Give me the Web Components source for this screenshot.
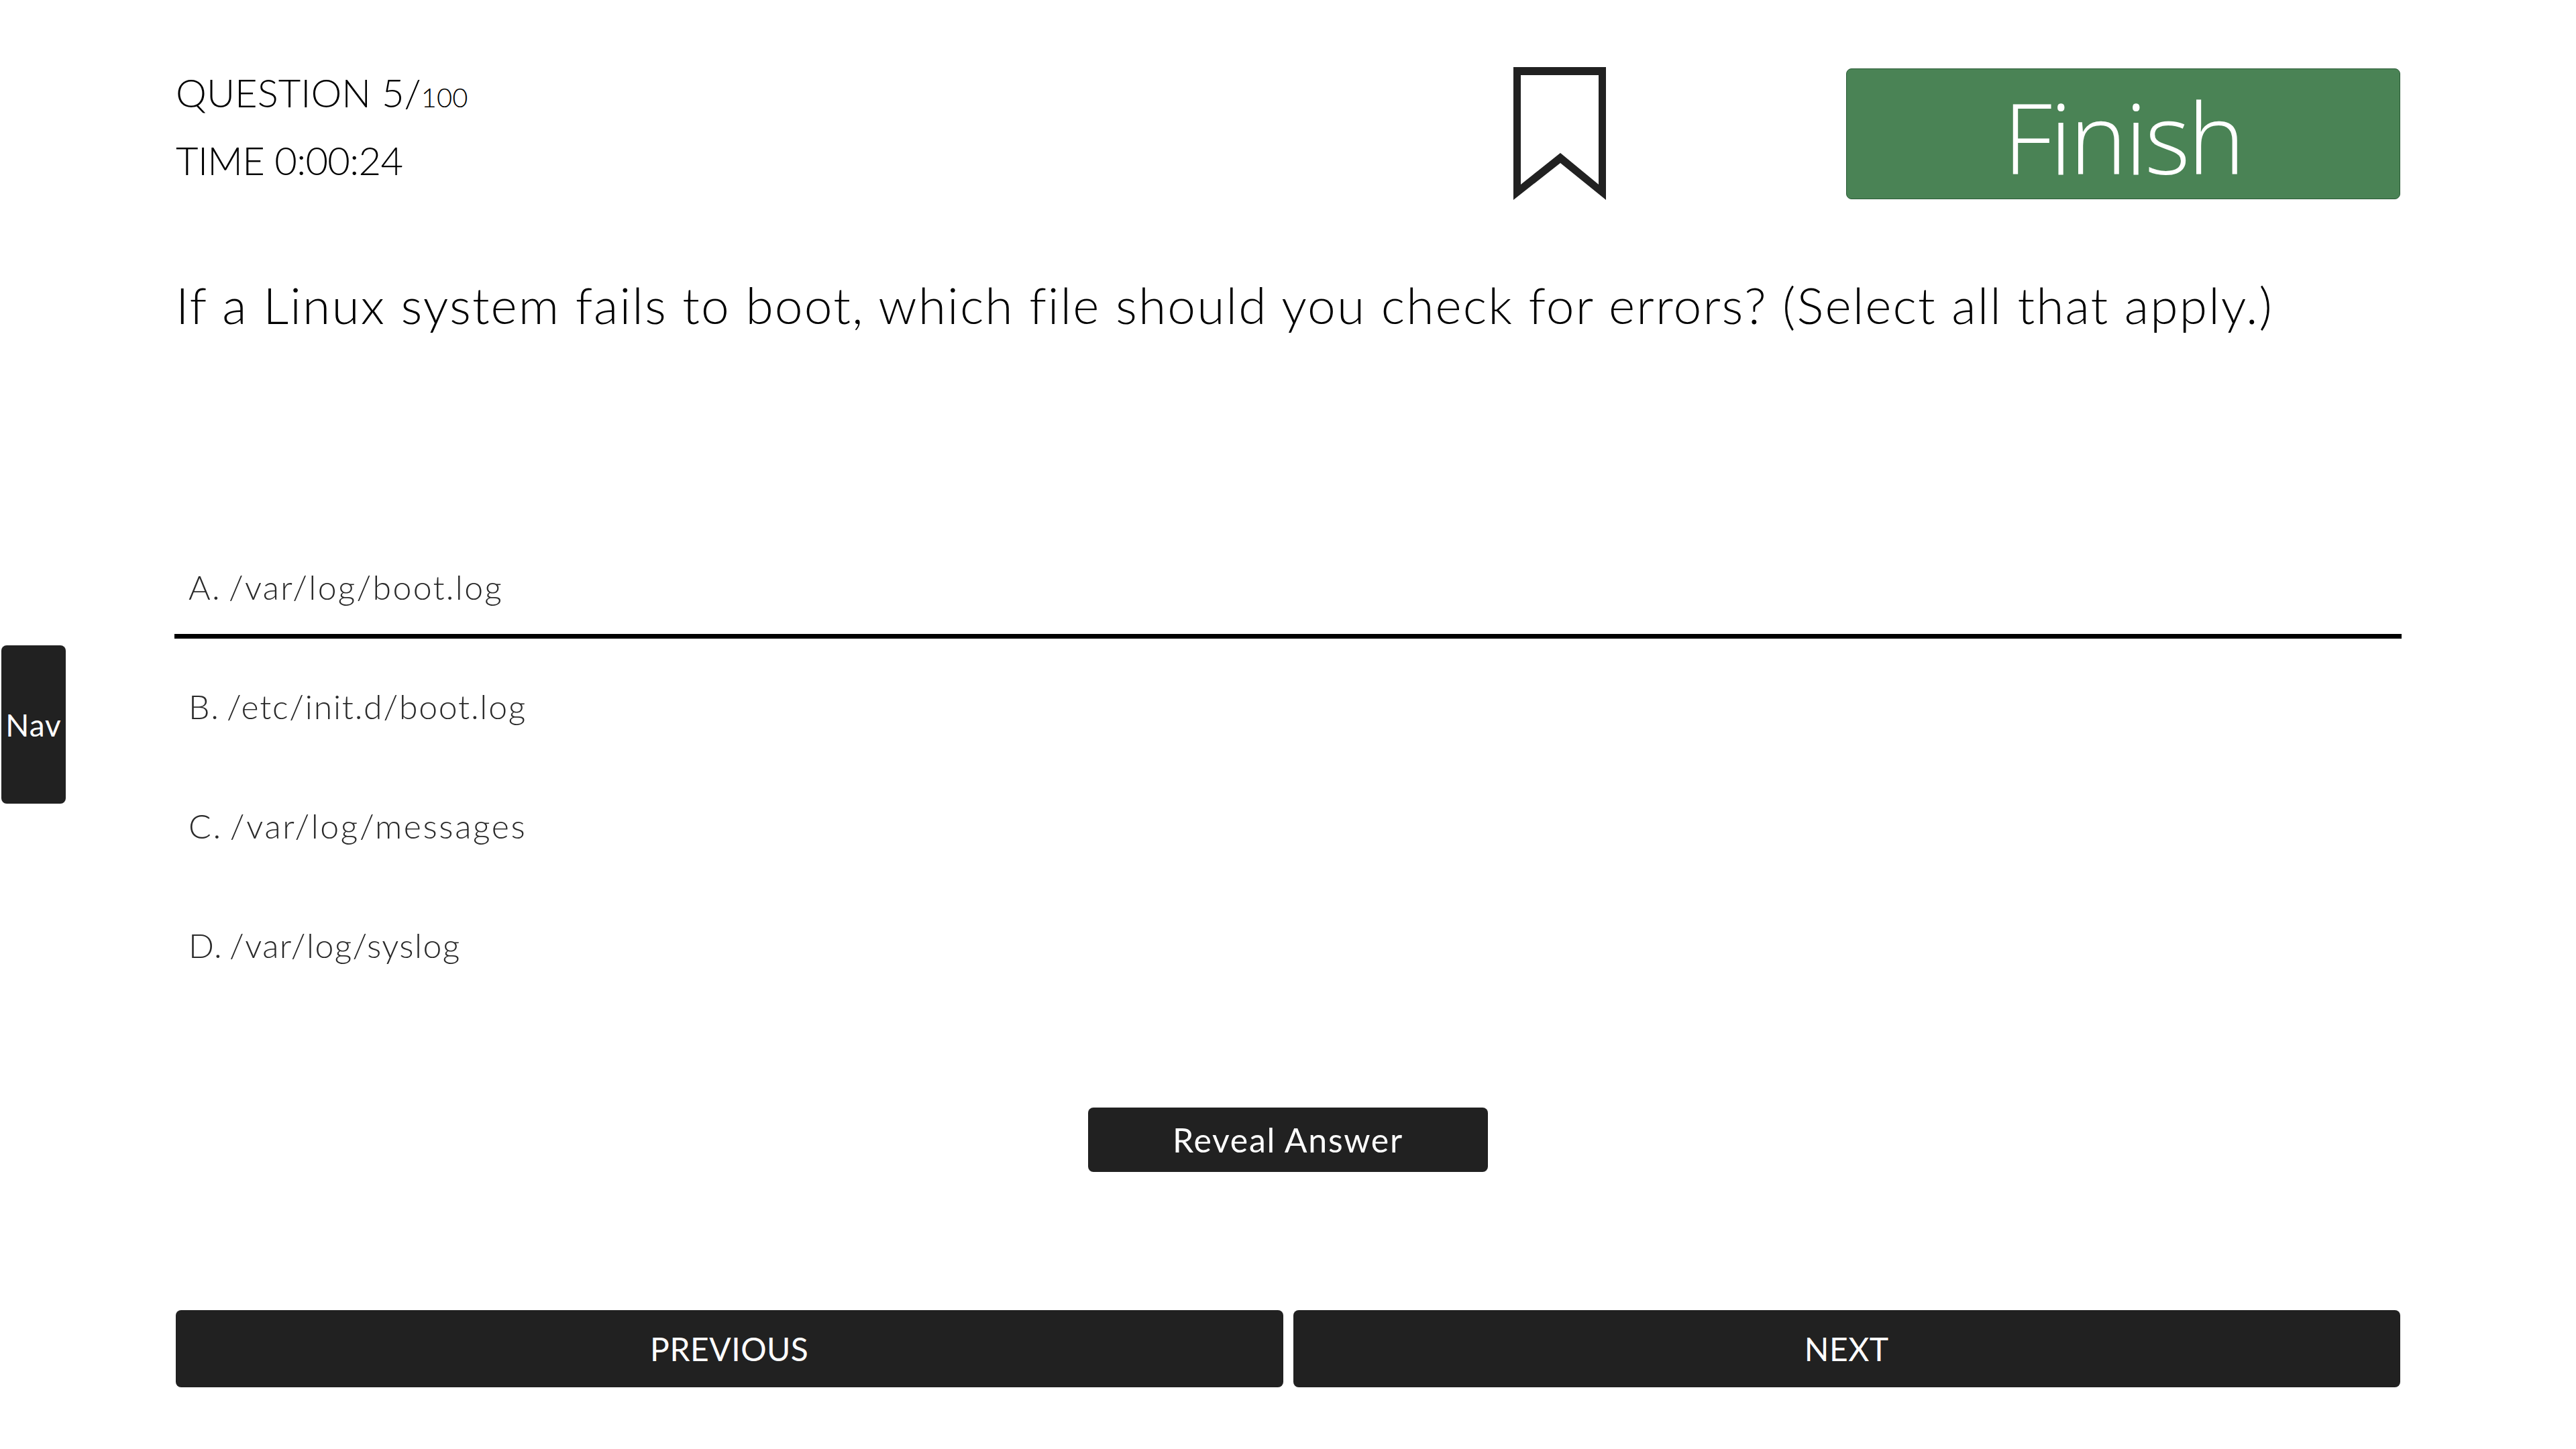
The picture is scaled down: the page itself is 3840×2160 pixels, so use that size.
<!DOCTYPE html>
<html>
<head>
<meta charset="utf-8">
<title>Quiz</title>
<style>
  html, body { margin: 0; background: #fff; }
  body { font-family: Lato, "Liberation Sans", sans-serif; font-weight: 300; color: #000; }
</style>
</head>
<body>
<quiz-page>
  <quiz-header slot="header" current="5" total="100" time="0:00:24"></quiz-header>
  <quiz-question slot="question">If a Linux system fails to boot, which file should you check for errors? (Select all that apply.)</quiz-question>
  <quiz-option selected style="letter-spacing: 2.3px">A. /var/log/boot.log</quiz-option>
  <quiz-option style="letter-spacing: 1.75px">B. /etc/init.d/boot.log</quiz-option>
  <quiz-option style="letter-spacing: 2.6px">C. /var/log/messages</quiz-option>
  <quiz-option style="letter-spacing: 1.4px">D. /var/log/syslog</quiz-option>
</quiz-page>

<script>
class QuizPage extends HTMLElement {
    constructor() {
        super();
        this.attachShadow({ mode: 'open' });
    }
    connectedCallback() {
        this.shadowRoot.innerHTML = `
            <style>
                :host {
                    display: block;
                    position: relative;
                    width: 3840px;
                    height: 2160px;
                    overflow: hidden;
                    box-sizing: border-box;
                    padding: 100px 262px 0;
                }
                .options {
                    display: flex;
                    flex-direction: column;
                    margin: 190px -2px 0;
                }
                .reveal {
                    display: flex;
                    justify-content: center;
                    margin-top: 165px;
                }
                .pager {
                    display: grid;
                    grid-template-columns: 1fr 1fr;
                    gap: 15px;
                    margin-top: 206px;
                }
                quiz-nav {
                    position: absolute;
                    left: 2px;
                    top: 962px;
                }
            </style>
            <slot name="header"></slot>
            <slot name="question"></slot>
            <div class="options"><slot></slot></div>
            <div class="reveal"><quiz-button kind="reveal">Reveal Answer</quiz-button></div>
            <div class="pager">
                <quiz-button kind="pager">PREVIOUS</quiz-button>
                <quiz-button kind="pager">NEXT</quiz-button>
            </div>
            <quiz-nav>Nav</quiz-nav>
        `;
    }
}

class QuizHeader extends HTMLElement {
    constructor() {
        super();
        this.attachShadow({ mode: 'open' });
    }
    connectedCallback() {
        const current = this.getAttribute('current');
        const total = this.getAttribute('total');
        const time = this.getAttribute('time');
        this.shadowRoot.innerHTML = `
            <style>
                :host {
                    display: grid;
                    grid-template-columns: 1fr 138px 826px;
                    column-gap: 358px;
                    align-items: start;
                    height: 198px;
                }
                .stats {
                    display: flex;
                    flex-direction: column;
                    gap: 22px;
                    padding-top: 2px;
                    font-size: 58px;
                    line-height: 72px;
                    color: #000;
                }
                .total { font-size: 40px; }
                .time { letter-spacing: -0.7px; }
                svg { display: block; width: 138px; height: 198px; }
                .finish {
                    display: flex;
                    align-items: center;
                    justify-content: center;
                    height: 195px;
                    margin-top: 2px;
                    padding-top: 8px;
                    box-sizing: border-box;
                    background: #4a8355;
                    border: 1px solid #2a5a36;
                    border-radius: 8px;
                    color: #fff;
                    font-family: "Open Sans", sans-serif;
                    font-weight: 300;
                    font-size: 145px;
                    letter-spacing: -3.3px;
                    line-height: 1;
                }
            </style>
            <div class="stats">
                <div>QUESTION ${current}/<span class="total">${total}</span></div>
                <div class="time">TIME ${time}</div>
            </div>
            <svg viewBox="0 0 138 198" aria-hidden="true">
                <path fill="#212121" fill-rule="evenodd" d="M0 0H138V198L70 143L0 198ZM11 12V175L70 128L127 175V12Z"/>
            </svg>
            <div class="finish">Finish</div>
        `;
    }
}

class QuizQuestion extends HTMLElement {
    constructor() {
        super();
        this.attachShadow({ mode: 'open' });
    }
    connectedCallback() {
        this.shadowRoot.innerHTML = `
            <style>
                :host {
                    display: block;
                    padding-top: 112px;
                    height: 174px;
                    font-size: 75px;
                    line-height: 88px;
                    letter-spacing: 2.1px;
                    color: #000;
                }
            </style>
            <slot></slot>
        `;
    }
}

class QuizOption extends HTMLElement {
    constructor() {
        super();
        this.attachShadow({ mode: 'open' });
    }
    connectedCallback() {
        this.shadowRoot.innerHTML = `
            <style>
                :host {
                    display: flex;
                    align-items: center;
                    height: 178px;
                    box-sizing: border-box;
                    padding: 30px 20px 0 21px;
                    border-bottom: 7px solid transparent;
                    font-size: 50px;
                    word-spacing: -5px;
                    color: #2a2a2a;
                }
                :host([selected]) { border-bottom-color: #000; }
            </style>
            <slot></slot>
        `;
    }
}

class QuizButton extends HTMLElement {
    constructor() {
        super();
        this.attachShadow({ mode: 'open' });
    }
    connectedCallback() {
        this.shadowRoot.innerHTML = `
            <style>
                :host {
                    display: flex;
                    align-items: center;
                    justify-content: center;
                    box-sizing: border-box;
                    background: #212121;
                    border-radius: 8px;
                    color: #fff;
                    font-weight: 400;
                }
                :host([kind="reveal"]) { width: 596px; height: 96px; font-size: 50px; letter-spacing: 1.7px; }
                :host([kind="pager"]) { height: 115px; font-size: 48px; letter-spacing: 0.5px; }
            </style>
            <slot></slot>
        `;
    }
}

class QuizNav extends HTMLElement {
    constructor() {
        super();
        this.attachShadow({ mode: 'open' });
    }
    connectedCallback() {
        this.shadowRoot.innerHTML = `
            <style>
                :host {
                    display: flex;
                    align-items: center;
                    justify-content: center;
                    width: 96px;
                    height: 236px;
                    background: #212121;
                    border-radius: 8px;
                    color: #fff;
                    font-size: 46px;
                    font-weight: 400;
                    letter-spacing: 1px;
                }
            </style>
            <slot></slot>
        `;
    }
}

customElements.define('quiz-header', QuizHeader);
customElements.define('quiz-question', QuizQuestion);
customElements.define('quiz-option', QuizOption);
customElements.define('quiz-button', QuizButton);
customElements.define('quiz-nav', QuizNav);
customElements.define('quiz-page', QuizPage);
</script>
</body>
</html>
